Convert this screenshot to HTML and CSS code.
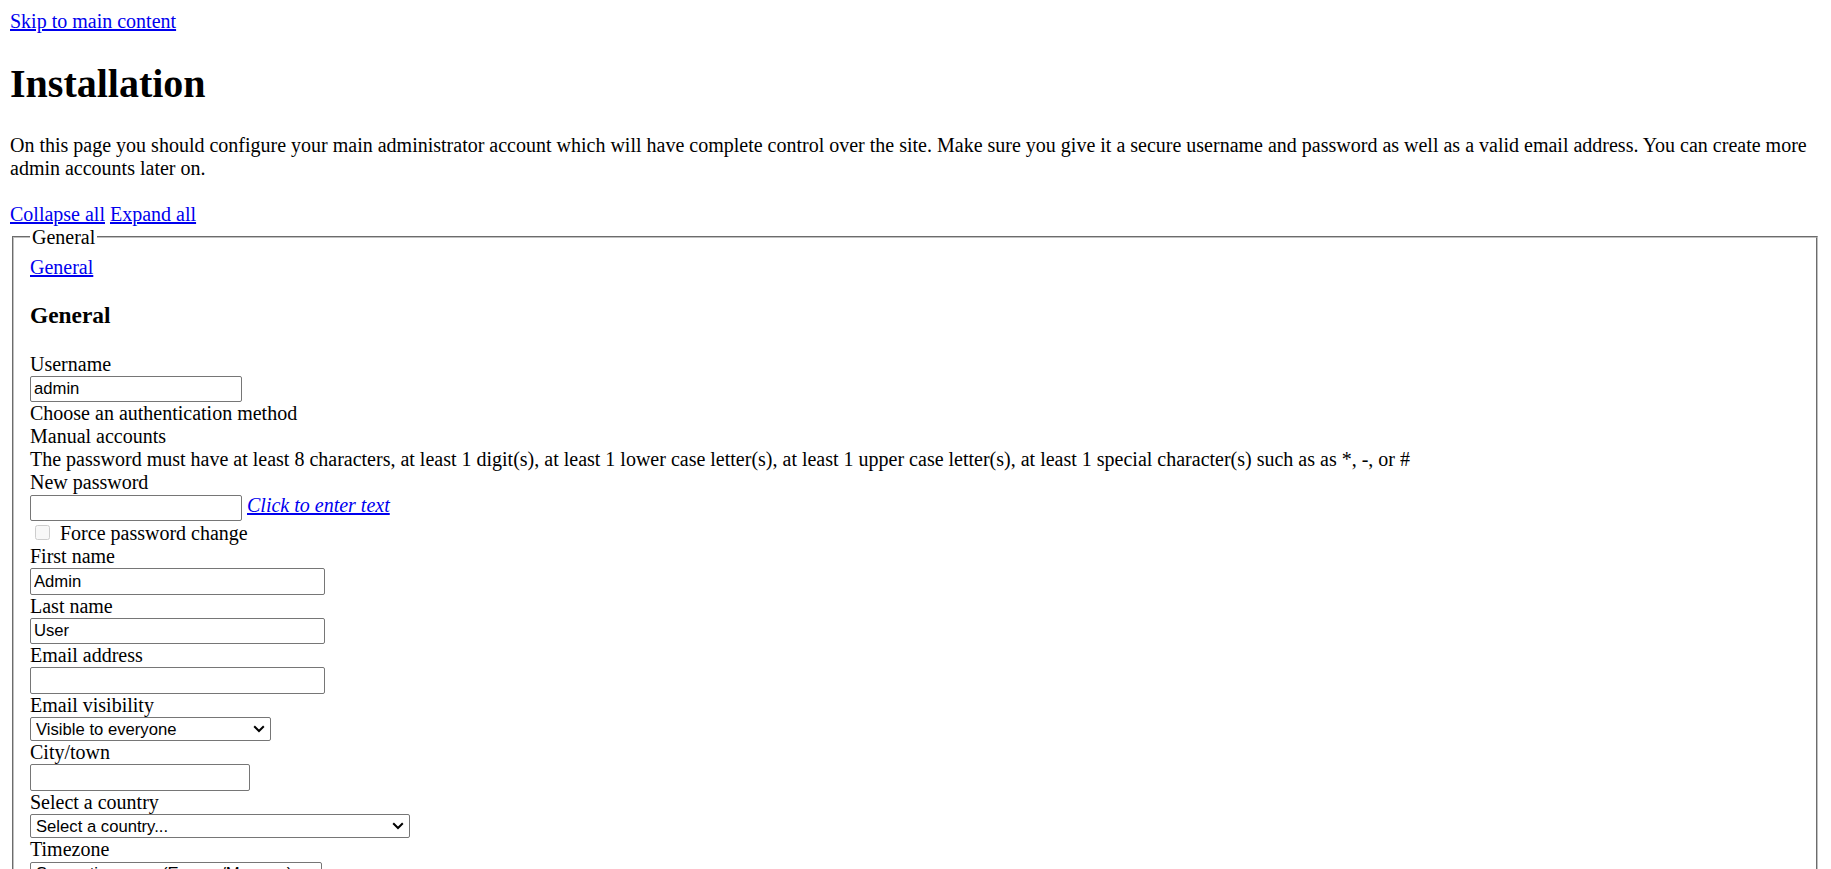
FILE: index.html
```html
<!DOCTYPE html>
<html lang="en">
<head>
<meta charset="utf-8">
<title>Installation</title>
<link rel="stylesheet" href="styles.css">
</head>
<body>
<div class="skip-row"><a href="#maincontent">Skip to main content</a></div>
<h1 class="page-title" id="maincontent">Installation</h1>
<p class="intro">On this page you should configure your main administrator account which will have complete control over the site. Make sure you give it a secure username and password as well as a valid email address. You can create more admin accounts later on.</p>
<div class="collapse-actions"><a href="#">Collapse all</a> <a href="#">Expand all</a></div>
<form class="admin-form">
  <fieldset class="panel">
    <legend class="panel-legend">General</legend>
    <div class="toggler"><a href="#">General</a></div>
    <h3 class="section-title">General</h3>

    <label class="field-label">Username</label>
    <input class="text-input w-212" type="text" value="admin">

    <div class="plain-line">Choose an authentication method</div>
    <div class="plain-line">Manual accounts</div>
    <div class="plain-line">The password must have at least 8 characters, at least 1 digit(s), at least 1 lower case letter(s), at least 1 upper case letter(s), at least 1 special character(s) such as as *, -, or #</div>

    <label class="field-label">New password</label>
    <div class="pw-row">
      <input class="text-input w-212 pw-input" type="text" value="">
      <a href="#" class="unmask">Click to enter text</a>
    </div>

    <div class="check-row">
      <input class="checkbox" type="checkbox" disabled>
      <span>Force password change</span>
    </div>

    <label class="field-label">First name</label>
    <input class="text-input w-295" type="text" value="Admin">

    <label class="field-label">Last name</label>
    <input class="text-input w-295" type="text" value="User">

    <label class="field-label">Email address</label>
    <input class="text-input w-295" type="text" value="">

    <label class="field-label">Email visibility</label>
    <div class="select-wrap w-241">
      <select class="select-input"><option>Visible to everyone</option></select>
      <svg class="chevron" width="12" height="8" viewBox="0 0 12 8"><path d="M1.2 1.3 L6 6 L10.8 1.3" fill="none" stroke="#000" stroke-width="2"/></svg>
    </div>

    <label class="field-label">City/town</label>
    <input class="text-input w-220" type="text" value="">

    <label class="field-label">Select a country</label>
    <div class="select-wrap w-380">
      <select class="select-input"><option>Select a country...</option></select>
      <svg class="chevron" width="12" height="8" viewBox="0 0 12 8"><path d="M1.2 1.3 L6 6 L10.8 1.3" fill="none" stroke="#000" stroke-width="2"/></svg>
    </div>

    <label class="field-label">Timezone</label>
    <div class="select-wrap w-292">
      <select class="select-input"><option>Server timezone (Europe/Moscow)</option></select>
      <svg class="chevron" width="12" height="8" viewBox="0 0 12 8"><path d="M1.2 1.3 L6 6 L10.8 1.3" fill="none" stroke="#000" stroke-width="2"/></svg>
    </div>

    <label class="field-label">Description</label>
    <textarea class="text-area"></textarea>
  </fieldset>
</form>
</body>
</html>
```
FILE: styles.css
```css
body {
  margin: 10px;
  font-family: "Liberation Serif", "Times New Roman", serif;
  font-size: 20px;
  color: #000;
  background: #fff;
}

a {
  color: #0000ee;
}

.page-title {
  font-size: 40px;
  font-weight: bold;
  margin: 26.8px 0;
}

.intro {
  margin: 20px 0 23.4px;
}

.panel {
  margin: 0 3px 0 2px;
  padding: 7px 16px 12.5px;
  border: 2px groove #c0c0c0;
  min-width: 0;
}

.panel-legend {
  padding: 0 2px;
}

.section-title {
  font-size: 23.4px;
  font-weight: bold;
  margin: 23.4px 0;
}

.field-label {
  display: block;
}

.text-input {
  display: block;
  box-sizing: border-box;
  height: 26.5px;
  margin: 0;
  padding: 1px 3px;
  border: 1px solid #767676;
  border-radius: 2px;
  background: #fff;
  color: #000;
  font-family: "Liberation Sans", Arial, sans-serif;
  font-size: 16.67px;
}

.w-212 { width: 212px; }
.w-295 { width: 295px; }
.w-220 { width: 220px; }
.w-241 { width: 241px; }
.w-380 { width: 380px; }
.w-292 { width: 292px; }

.pw-row {
  display: flex;
  align-items: flex-start;
  gap: 5px;
  height: 28px;
}

.pw-input {
  margin-top: 0.3px;
}

.unmask {
  font-style: italic;
}

.check-row {
  display: flex;
  align-items: flex-start;
  height: 23px;
}

.checkbox {
  appearance: none;
  -webkit-appearance: none;
  box-sizing: border-box;
  width: 15px;
  height: 15px;
  margin: 3px 10px 0 5px;
  border: 1px solid #cdcdcd;
  border-radius: 2.5px;
  background: #f8f8f8;
}

.select-wrap {
  position: relative;
  margin: 0.5px 0;
}

.select-input {
  appearance: none;
  -webkit-appearance: none;
  display: block;
  box-sizing: border-box;
  width: 100%;
  height: 23.5px;
  margin: 0;
  padding: 0 20px 0 5px;
  border: 1px solid #767676;
  border-radius: 2px;
  background: #fff;
  color: #000;
  font-family: "Liberation Sans", Arial, sans-serif;
  font-size: 16.67px;
}

.chevron {
  position: absolute;
  right: 6px;
  top: 8px;
}

.text-area {
  display: block;
  width: 400px;
  height: 80px;
}
```
